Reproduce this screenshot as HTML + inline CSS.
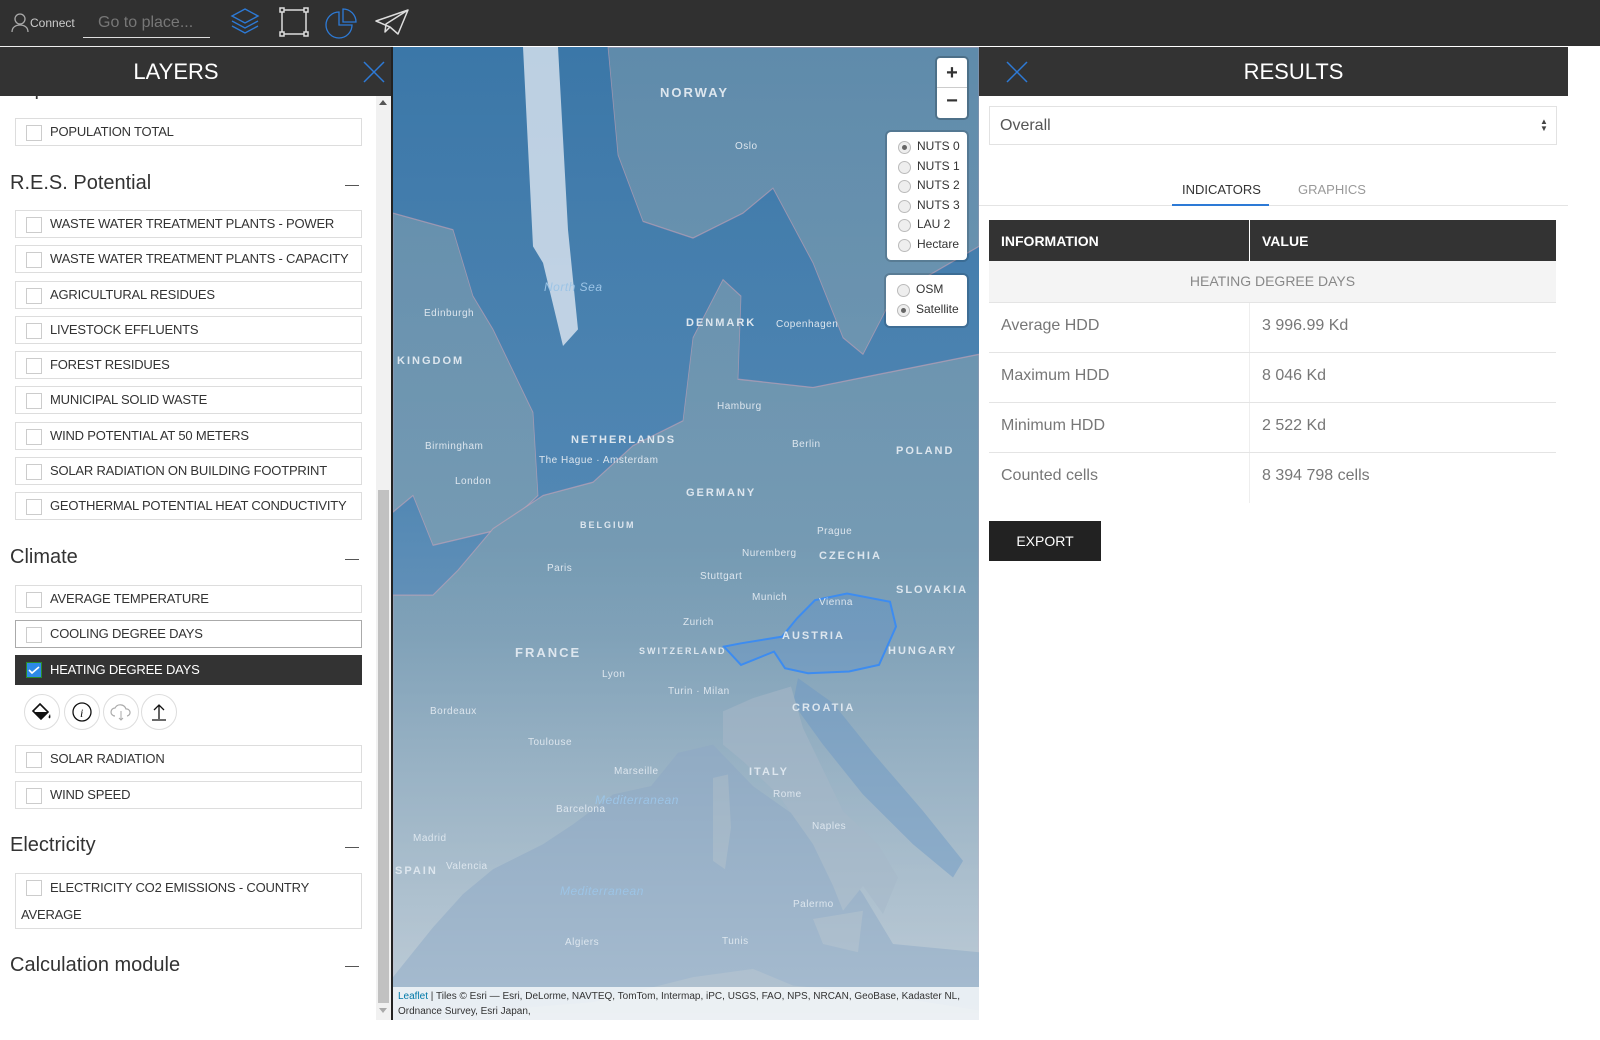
<!DOCTYPE html>
<html style="overflow:hidden"><head><meta charset="utf-8">
<style>
*{box-sizing:border-box;margin:0;padding:0}
body{width:1600px;height:1040px;position:relative;overflow:hidden;background:#fff;font-family:"Liberation Sans",sans-serif;color:#333}
.abs{position:absolute}
.top{left:0;top:0;width:1600px;height:46px;background:#303030}
.hdr{background:#333;color:#fff;height:49px;top:47px}
.box{position:absolute;left:15px;width:347px;height:28px;border:1px solid #ddd;font-size:13px;letter-spacing:-0.2px;white-space:nowrap;color:#333;line-height:26px;padding-left:34px}
.box:before{content:"";position:absolute;left:10px;top:6px;width:14px;height:14px;border:1px solid #ccc;background:#fff}
.sec{position:absolute;left:10px;font-size:20px;color:#333}
.dash{position:absolute;left:345px;width:14px;height:1px;background:#555}
.circ{position:absolute;top:694px;width:36px;height:36px;border:1px solid #ddd;border-radius:50%}
.row{position:absolute;left:989px;width:567px;height:50px;border-bottom:1px solid #e4e4e4;font-size:16px;color:#777}
.row span{position:absolute;top:14px}
.lbl{position:absolute;font-size:11px;font-weight:bold;letter-spacing:2px;color:#dde6ee}
.city{position:absolute;font-size:10px;color:#dde6ee;letter-spacing:.5px}
.rad{font-size:12px;color:#333;height:19.6px;line-height:19.6px;padding-left:30px;position:relative}
.rad:before{content:"";position:absolute;left:11px;top:4px;width:11px;height:11px;border-radius:50%;border:1px solid #bbb;background:#eee}
.rad.on:after{content:"";position:absolute;left:15px;top:8px;width:5px;height:5px;border-radius:50%;background:#666}
</style></head><body>
<div class="abs top"></div>
<svg class="abs" style="left:10px;top:12px" width="20" height="22" viewBox="0 0 20 22"><circle cx="10" cy="7" r="5" fill="none" stroke="#aaa" stroke-width="1.3"/><path d="M2 20c0-5 4-7 8-7s8 2 8 7" fill="none" stroke="#aaa" stroke-width="1.3"/></svg>
<div class="abs" style="left:30px;top:16px;font-size:12px;color:#ccc">Connect</div>
<div class="abs" style="left:83px;top:12px;width:127px;height:26px;border-bottom:1px solid #ddd;font-size:16px;color:#777;padding-left:15px;line-height:22px">Go to place...</div>
<svg class="abs" style="left:228px;top:6px" width="34" height="32" viewBox="0 0 34 32"><g fill="none" stroke="#2d7ad6" stroke-width="1.4"><path d="M17 3 30 10 17 17 4 10Z"/><path d="M4 15l13 7 13-7"/><path d="M4 20l13 7 13-7"/></g></svg>
<svg class="abs" style="left:278px;top:6px" width="32" height="32" viewBox="0 0 32 32"><g fill="none" stroke="#ddd" stroke-width="1.5"><rect x="4" y="4" width="24" height="24"/><rect x="2" y="2" width="4" height="4" fill="#303030"/><rect x="26" y="2" width="4" height="4" fill="#303030"/><rect x="2" y="26" width="4" height="4" fill="#303030"/><rect x="26" y="26" width="4" height="4" fill="#303030"/></g></svg>
<svg class="abs" style="left:325px;top:7px" width="34" height="32" viewBox="0 0 34 32"><g fill="none" stroke="#2d7ad6" stroke-width="1.3"><path d="M14 5A13 13 0 1 0 27 18H14Z"/><path d="M18 2A13 13 0 0 1 31 15H18Z"/></g></svg>
<svg class="abs" style="left:374px;top:8px" width="36" height="28" viewBox="0 0 36 28"><g fill="none" stroke="#ddd" stroke-width="1.5" stroke-linejoin="round"><path d="M2 13 34 2 24 26 16 19Z"/><path d="M34 2 12 16 11 24 16 19"/></g></svg>
<div class="abs" style="left:0;top:46px;width:393px;height:1px;background:#eee"></div>

<!-- LEFT PANEL -->
<div class="abs" style="left:0;top:47px;width:393px;height:993px;background:#fff"></div>
<div class="sec" style="top:78px">Population</div>
<div class="abs hdr" style="left:0;width:392px"><div style="text-align:center;font-size:22px;line-height:49px;padding-right:40px">LAYERS</div>
<svg class="abs" style="left:363px;top:14px" width="22" height="22"><path d="M1 1 21 21M21 1 1 21" stroke="#2d7ad6" stroke-width="1.5"/></svg></div>
<div class="box" style="top:118px">POPULATION TOTAL</div>
<div class="sec" style="top:172px">R.E.S. Potential</div><div class="dash" style="top:185px"></div>
<div class="box" style="top:210px">WASTE WATER TREATMENT PLANTS - POWER</div>
<div class="box" style="top:245px">WASTE WATER TREATMENT PLANTS - CAPACITY</div>
<div class="box" style="top:281px">AGRICULTURAL RESIDUES</div>
<div class="box" style="top:316px">LIVESTOCK EFFLUENTS</div>
<div class="box" style="top:351px">FOREST RESIDUES</div>
<div class="box" style="top:386px">MUNICIPAL SOLID WASTE</div>
<div class="box" style="top:422px">WIND POTENTIAL AT 50 METERS</div>
<div class="box" style="top:457px">SOLAR RADIATION ON BUILDING FOOTPRINT</div>
<div class="box" style="top:492px">GEOTHERMAL POTENTIAL HEAT CONDUCTIVITY</div>
<div class="sec" style="top:546px">Climate</div><div class="dash" style="top:559px"></div>
<div class="box" style="top:585px">AVERAGE TEMPERATURE</div>
<div class="box" style="top:620px;border-color:#aaa">COOLING DEGREE DAYS</div>
<div class="box" style="top:655px;height:30px;background:#333;color:#fff;border-color:#333;line-height:28px">HEATING DEGREE DAYS</div>
<svg class="abs" style="left:26px;top:662px" width="16" height="16"><rect x=".5" y=".5" width="15" height="15" fill="#2d8ae6" stroke="#2a8a2a"/><path d="M3 8l3 3 7-6" stroke="#fff" stroke-width="1.6" fill="none"/></svg>
<div class="circ" style="left:24px"></div><div class="circ" style="left:64px"></div><div class="circ" style="left:103px"></div><div class="circ" style="left:141px"></div>
<svg class="abs" style="left:31px;top:702px" width="22" height="20" viewBox="0 0 22 20"><path d="M9 2 17 10 10 17 2 9Z" fill="none" stroke="#111" stroke-width="1.6"/><path d="M3 10h14l-7 7Z" fill="#111"/><path d="M19 12c-1 2-2 3-1 4s2 0 1-4Z" fill="#111"/></svg>
<svg class="abs" style="left:71px;top:701px" width="22" height="22"><circle cx="11" cy="11" r="9" fill="none" stroke="#111" stroke-width="1.3"/><text x="9" y="16" font-size="12" font-style="italic" font-family="Liberation Serif" fill="#111">i</text></svg>
<svg class="abs" style="left:109px;top:702px" width="24" height="20"><path d="M6 14a4 4 0 0 1 0-8 6 6 0 0 1 11 1 3.5 3.5 0 0 1 1 7" fill="none" stroke="#aaa" stroke-width="1.2"/><path d="M12 9v9m-2-2 2 2 2-2" stroke="#aaa" fill="none"/></svg>
<svg class="abs" style="left:149px;top:702px" width="20" height="20"><path d="M10 17V3M5 8l5-5 5 5M3 18h14" stroke="#111" stroke-width="1.3" fill="none"/></svg>
<div class="box" style="top:745px">SOLAR RADIATION</div>
<div class="box" style="top:781px">WIND SPEED</div>
<div class="sec" style="top:834px">Electricity</div><div class="dash" style="top:847px"></div>
<div class="box" style="top:873px;height:56px;line-height:27px;padding-left:5px;text-indent:29px">ELECTRICITY CO2 EMISSIONS - COUNTRY<br><span style="display:inline-block;text-indent:0">AVERAGE</span></div>
<div class="sec" style="top:954px">Calculation module</div><div class="dash" style="top:966px"></div>
<div class="abs" style="left:376px;top:96px;width:15px;height:924px;background:#f1f1f1"></div>
<div class="abs" style="left:378px;top:490px;width:11px;height:513px;background:#c1c1c1"></div>
<div class="abs" style="left:379px;top:100px;width:0;height:0;border:4px solid transparent;border-bottom:5px solid #555;border-top:0"></div>
<div class="abs" style="left:379px;top:1008px;width:0;height:0;border:4px solid transparent;border-top:5px solid #aaa;border-bottom:0"></div>
<div class="abs" style="left:391px;top:47px;width:2px;height:973px;background:#222"></div>

<!-- MAP -->
<svg class="abs" style="left:393px;top:47px;overflow:hidden" width="586" height="973" viewBox="0 0 586 973">
<defs>
<linearGradient id="sea" x1="0" y1="0" x2="0" y2="1"><stop offset="0" stop-color="#3b77a8"/><stop offset=".45" stop-color="#4a82b0"/><stop offset="1" stop-color="#92abc6"/></linearGradient>
<linearGradient id="land" gradientUnits="userSpaceOnUse" x1="0" y1="0" x2="0" y2="600"><stop offset="0" stop-color="#5f8bab"/><stop offset=".5" stop-color="#6f96b0"/><stop offset="1" stop-color="#a7b9c8"/></linearGradient>
<linearGradient id="haze" x1="0" y1="0" x2="0" y2="1"><stop offset="0" stop-color="#fff" stop-opacity="0"/><stop offset=".6" stop-color="#fff" stop-opacity=".05"/><stop offset="1" stop-color="#fff" stop-opacity=".3"/></linearGradient>
</defs>
<rect width="586" height="973" fill="url(#sea)"/>
<g transform="scale(1,1.661)">
<g fill="url(#land)" stroke="#c9a0b4" stroke-width=".8" stroke-opacity=".6">
<path d="M215 0H586V120L500 150 470 185 450 175 420 130 380 85 350 100 300 115 250 105 225 65Z"/>
<path d="M0 100 60 110 80 150 100 170 140 220 145 270 110 290 40 300 20 270 0 280Z"/>
<path d="M300 175 330 140 348 150 345 200 420 205 586 185V973H0V330L40 330 65 315 100 290 150 270 200 262 240 240 290 225Z"/>
</g>
<path d="M0 560 40 530 70 510 100 495 150 480 180 468 220 450 258 445 285 425 320 420 360 445 400 462 440 485 470 510 500 540 586 545V595H0Z" fill="#819fbb"/>
<path d="M405 380 440 395 480 425 530 460 570 490 560 500 520 480 470 450 430 420 400 395Z" fill="#6f97bb"/>
<g fill="#91a9bd">
<path d="M330 400 360 392 398 385 410 410 450 460 485 480 505 500 490 522 470 505 450 520 440 505 420 480 385 450 350 430 330 420Z"/>
<path d="M320 440 335 438 338 470 332 495 320 490Z"/>
<path d="M420 525 470 520 465 545 430 540Z"/>
<path d="M0 590 100 580 200 575 300 560 360 555 400 565 480 570 586 580V973H0Z"/>
</g>
</g>
<rect width="586" height="973" fill="url(#haze)"/>
<g transform="scale(1,1.661)">
<path d="M130 0H165L175 110 185 170 170 180 150 130 140 120Z" fill="#e8eef5" opacity=".75"/>
<path d="M331 361 348 359 389 355 404 344 422 333 454 329 497 334 503 349 486 372 456 376 415 377 392 374 381 364 348 372Z" fill="#4a86d0" fill-opacity=".25" stroke="#3d8cf0" stroke-width="2" vector-effect="non-scaling-stroke"/>
</g>
</svg>
<div class="lbl" style="left:660px;top:85px;font-size:13px">NORWAY</div>
<div class="lbl" style="left:686px;top:317px">DENMARK</div>
<div class="lbl" style="left:397px;top:355px">KINGDOM</div>
<div class="lbl" style="left:571px;top:434px">NETHERLANDS</div>
<div class="lbl" style="left:686px;top:487px">GERMANY</div>
<div class="lbl" style="left:896px;top:445px">POLAND</div>
<div class="lbl" style="left:819px;top:550px">CZECHIA</div>
<div class="lbl" style="left:896px;top:584px">SLOVAKIA</div>
<div class="lbl" style="left:515px;top:645px;font-size:13px">FRANCE</div>
<div class="lbl" style="left:782px;top:630px">AUSTRIA</div>
<div class="lbl" style="left:888px;top:645px">HUNGARY</div>
<div class="lbl" style="left:792px;top:702px">CROATIA</div>
<div class="lbl" style="left:749px;top:766px">ITALY</div>
<div class="lbl" style="left:580px;top:520px;font-size:9px">BELGIUM</div>
<div class="lbl" style="left:639px;top:646px;font-size:9px">SWITZERLAND</div>
<div class="lbl" style="left:395px;top:865px">SPAIN</div>
<div class="city" style="left:735px;top:141px">Oslo</div>
<div class="city" style="left:776px;top:319px">Copenhagen</div>
<div class="city" style="left:717px;top:401px">Hamburg</div>
<div class="city" style="left:792px;top:439px">Berlin</div>
<div class="city" style="left:539px;top:455px">The Hague · Amsterdam</div>
<div class="city" style="left:455px;top:476px">London</div>
<div class="city" style="left:547px;top:563px">Paris</div>
<div class="city" style="left:817px;top:526px">Prague</div>
<div class="city" style="left:742px;top:548px">Nuremberg</div>
<div class="city" style="left:700px;top:571px">Stuttgart</div>
<div class="city" style="left:752px;top:592px">Munich</div>
<div class="city" style="left:819px;top:597px">Vienna</div>
<div class="city" style="left:683px;top:617px">Zurich</div>
<div class="city" style="left:602px;top:669px">Lyon</div>
<div class="city" style="left:668px;top:686px">Turin · Milan</div>
<div class="city" style="left:430px;top:706px">Bordeaux</div>
<div class="city" style="left:528px;top:737px">Toulouse</div>
<div class="city" style="left:614px;top:766px">Marseille</div>
<div class="city" style="left:556px;top:804px">Barcelona</div>
<div class="city" style="left:413px;top:833px">Madrid</div>
<div class="city" style="left:446px;top:861px">Valencia</div>
<div class="city" style="left:773px;top:789px">Rome</div>
<div class="city" style="left:812px;top:821px">Naples</div>
<div class="city" style="left:565px;top:937px">Algiers</div>
<div class="city" style="left:722px;top:936px">Tunis</div>
<div class="city" style="left:793px;top:899px">Palermo</div>
<div class="city" style="left:424px;top:308px">Edinburgh</div>
<div class="city" style="left:425px;top:441px">Birmingham</div>
<div class="city" style="left:595px;top:793px;font-size:12px;font-style:italic;color:#9cc4e6">Mediterranean</div>
<div class="city" style="left:560px;top:884px;font-size:12px;font-style:italic;color:#9cc4e6">Mediterranean</div>
<div class="city" style="left:544px;top:280px;font-size:12px;font-style:italic;color:#9cc4e6">North Sea</div>
<div class="abs" style="left:393px;top:987px;width:586px;height:33px;background:rgba(255,255,255,.75);font-size:10px;color:#333;padding:2px 5px;line-height:15px;overflow:hidden"><span style="color:#0078a8">Leaflet</span> | Tiles © Esri — Esri, DeLorme, NAVTEQ, TomTom, Intermap, iPC, USGS, FAO, NPS, NRCAN, GeoBase, Kadaster NL, Ordnance Survey, Esri Japan,</div>
<div class="abs" style="left:937px;top:58px;width:30px;height:60px;background:#fff;border-radius:3px;box-shadow:0 0 0 2px rgba(0,0,0,.2)">
<div style="height:30px;border-bottom:1px solid #ccc;text-align:center;font-size:20px;font-weight:bold;line-height:30px">+</div>
<div style="text-align:center;font-size:20px;font-weight:bold;line-height:26px">−</div></div>
<div class="abs" style="left:887px;top:132px;width:80px;height:128px;background:#fff;border-radius:4px;padding-top:5px;box-shadow:0 0 0 2px rgba(0,0,0,.15)">
<div class="rad on">NUTS 0</div><div class="rad">NUTS 1</div><div class="rad">NUTS 2</div><div class="rad">NUTS 3</div><div class="rad">LAU 2</div><div class="rad">Hectare</div></div>
<div class="abs" style="left:886px;top:275px;width:81px;height:51px;background:#fff;border-radius:4px;padding-top:5px;box-shadow:0 0 0 2px rgba(0,0,0,.15)">
<div class="rad">OSM</div><div class="rad on">Satellite</div></div>

<!-- RIGHT PANEL -->
<div class="abs hdr" style="left:979px;width:589px"><div style="text-align:center;font-size:22px;line-height:49px;padding-left:40px">RESULTS</div>
<svg class="abs" style="left:27px;top:14px" width="22" height="22"><path d="M1 1 21 21M21 1 1 21" stroke="#2d7ad6" stroke-width="1.5"/></svg></div>
<div class="abs" style="left:989px;top:106px;width:568px;height:39px;border:1px solid #e2e2e2;font-size:16px;color:#555;line-height:37px;padding-left:10px">Overall</div>
<div class="abs" style="left:1540px;top:118px;font-size:8px;line-height:7px;color:#444">▲<br>▼</div>
<div class="abs" style="left:979px;top:205px;width:589px;height:1px;background:#e4e4e4"></div>
<div class="abs" style="left:1182px;top:182px;font-size:13px;color:#333">INDICATORS</div>
<div class="abs" style="left:1172px;top:204px;width:97px;height:2px;background:#2d7ad6"></div>
<div class="abs" style="left:1298px;top:182px;font-size:13px;color:#999">GRAPHICS</div>
<div class="abs" style="left:989px;top:220px;width:567px;height:41px;background:#333"></div>
<div class="abs" style="left:1249px;top:220px;width:1px;height:41px;background:#fff"></div>
<div class="abs" style="left:1001px;top:233px;font-size:14px;font-weight:bold;color:#fff">INFORMATION</div>
<div class="abs" style="left:1262px;top:233px;font-size:14px;font-weight:bold;color:#fff">VALUE</div>
<div class="abs" style="left:989px;top:261px;width:567px;height:42px;background:#f4f4f4;border-bottom:1px solid #e4e4e4;text-align:center;font-size:14px;color:#888;line-height:40px">HEATING DEGREE DAYS</div>
<div class="abs" style="left:1249px;top:303px;width:1px;height:200px;background:#eee"></div>
<div class="row" style="top:303px"><span style="left:12px">Average HDD</span><span style="left:273px">3 996.99 Kd</span></div>
<div class="row" style="top:353px"><span style="left:12px">Maximum HDD</span><span style="left:273px">8 046 Kd</span></div>
<div class="row" style="top:403px"><span style="left:12px">Minimum HDD</span><span style="left:273px">2 522 Kd</span></div>
<div class="row" style="top:453px;border-bottom:0"><span style="left:12px">Counted cells</span><span style="left:273px">8 394 798 cells</span></div>
<div class="abs" style="left:989px;top:521px;width:112px;height:40px;background:#222;color:#fff;font-size:14px;text-align:center;line-height:40px">EXPORT</div>
</body></html>
